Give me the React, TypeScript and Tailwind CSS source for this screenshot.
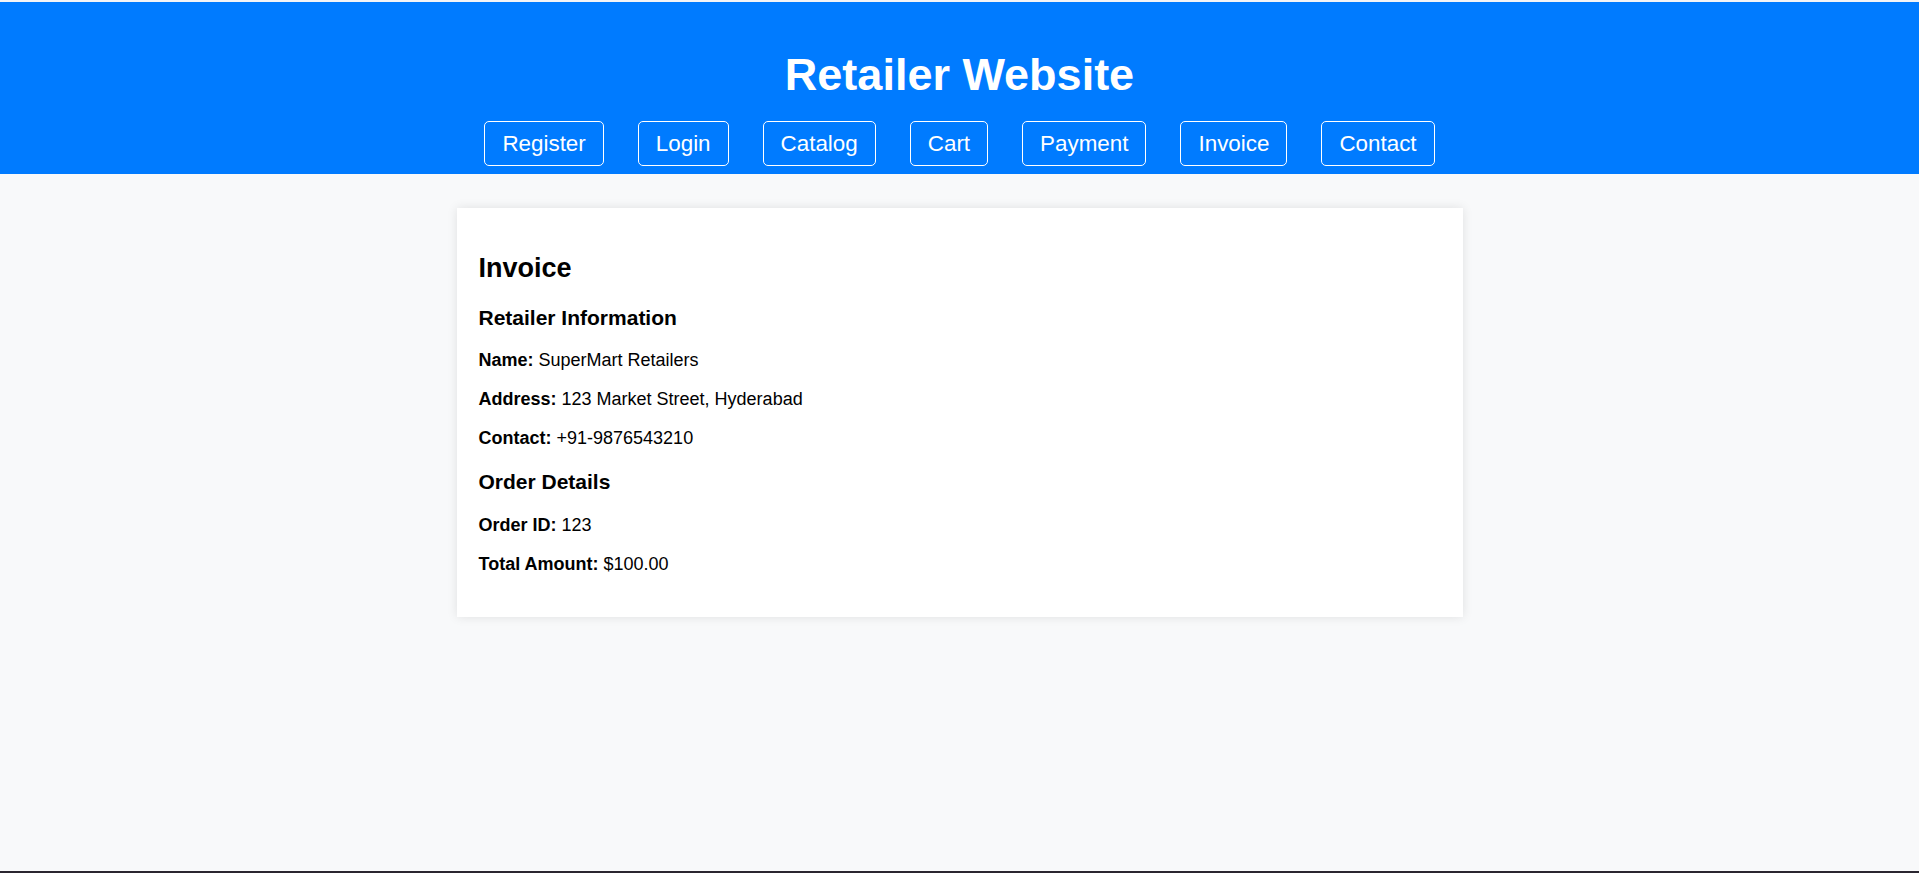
import React from "react";

const navLinks = ["Register", "Login", "Catalog", "Cart", "Payment", "Invoice", "Contact"];

export default function App() {
  return (
    <div
      className="min-h-screen flex flex-col bg-[#f8f9fa] text-black"
      style={{ fontFamily: '"Liberation Sans", Arial, sans-serif' }}
    >
      <div className="h-[2px] bg-[#f3f4f6]" />
      <header className="bg-[#007bff] text-white text-center pt-[47px] pb-[8px]">
        <h1 className="text-[45px] leading-[51px] font-bold mb-[21px]">Retailer Website</h1>
        <nav className="flex justify-center gap-[34px]">
          {navLinks.map((link) => (
            <a
              key={link}
              href="#"
              className="border border-white rounded-[5px] px-[17px] py-[8.8px] text-[22.4px] leading-[25px] text-white"
            >
              {link}
            </a>
          ))}
        </nav>
      </header>

      <main className="flex-1 pt-[34px]">
        <div className="w-[1006px] mx-auto bg-white shadow-[0_0_10px_rgba(0,0,0,0.1)] px-[22px] pt-[22px] pb-[24px]">
          <h2 className="text-[27px] leading-[30px] font-bold mt-[23px] mb-[23px]">Invoice</h2>

          <h3 className="text-[21px] leading-[24px] font-bold mt-[21px] mb-[20.6px]">
            Retailer Information
          </h3>
          <p className="text-[18px] leading-[21px] my-[18px]">
            <strong>Name:</strong> SuperMart Retailers
          </p>
          <p className="text-[18px] leading-[21px] my-[18px]">
            <strong>Address:</strong> 123 Market Street, Hyderabad
          </p>
          <p className="text-[18px] leading-[21px] my-[18px]">
            <strong>Contact:</strong> +91-9876543210
          </p>

          <h3 className="text-[21px] leading-[24px] font-bold mt-[20.6px] mb-[21.5px]">
            Order Details
          </h3>
          <p className="text-[18px] leading-[21px] my-[18px]">
            <strong>Order ID:</strong> 123
          </p>
          <p className="text-[18px] leading-[21px] mt-[18px] mb-[18px]">
            <strong>Total Amount:</strong> $100.00
          </p>
        </div>
      </main>

      <div className="h-[2px] bg-[#2a2630]" />
    </div>
  );
}
